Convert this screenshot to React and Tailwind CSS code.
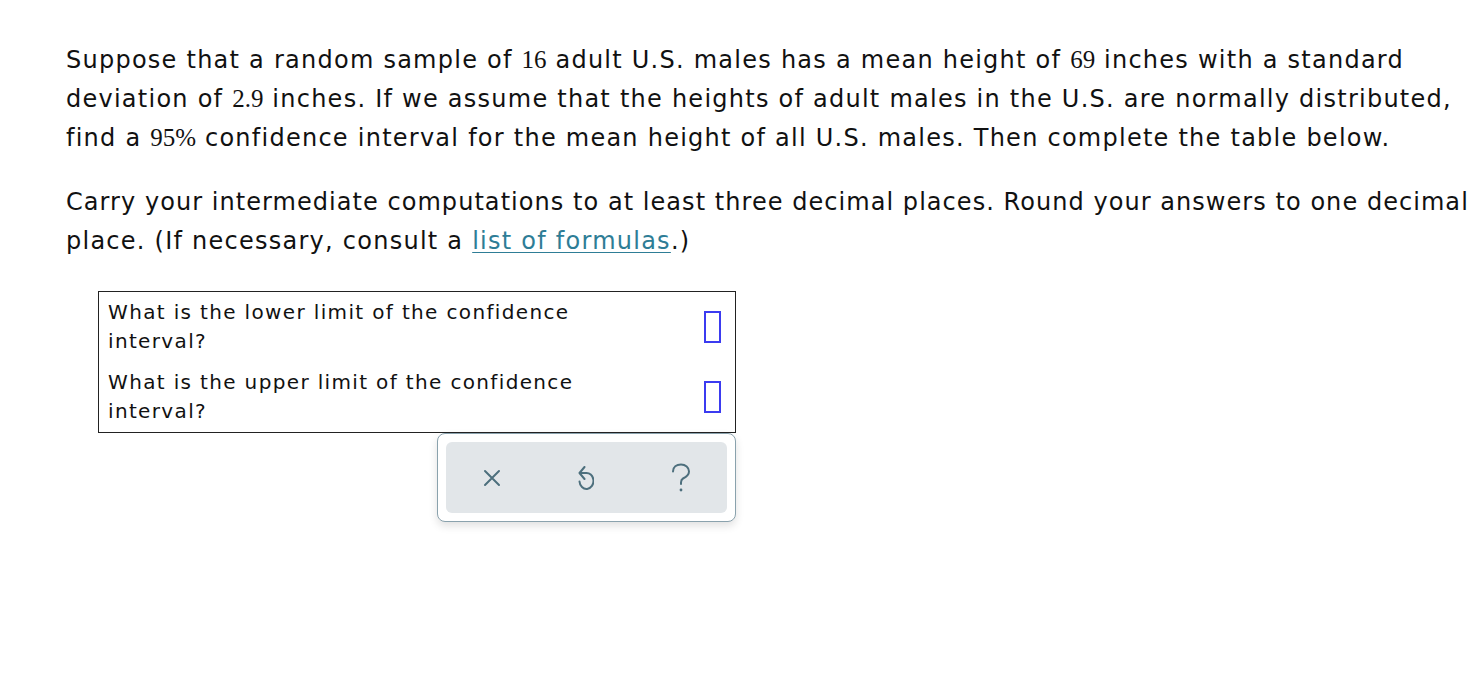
import React from "react";

const num = "font-['Liberation_Serif',serif] text-[25px] leading-none tracking-normal";

export default function App() {
  return (
    <div className="min-h-[678px] w-[1481px] overflow-hidden bg-white font-['DejaVu_Sans',Verdana,sans-serif] text-[#111]">
      <div className="pl-[66px] pt-[41px]">
        <p className="whitespace-nowrap text-[24px] leading-[39px] tracking-[1.25px]">
          Suppose that a random sample of <span className={num}>16</span> adult U.S. males has a mean height of{" "}
          <span className={num}>69</span> inches with a standard
          <br />
          deviation of <span className={num}>2.9</span> inches. If we assume that the heights of adult males in the U.S.
          are normally distributed,
          <br />
          find a <span className={num}>95%</span> confidence interval for the mean height of all U.S. males. Then complete
          the table below.
        </p>
        <p className="mt-[25px] whitespace-nowrap text-[24px] leading-[39px] tracking-[1.25px]">
          <span className="tracking-[1.05px]">
            Carry your intermediate computations to at least three decimal places. Round your answers to one decimal
          </span>
          <br />
          place. (If necessary, consult a{" "}
          <a href="#" className="text-[#2e7d96] underline decoration-1 underline-offset-[3px]">
            list of formulas
          </a>
          .)
        </p>
      </div>
      <div className="ml-[98px] mt-[30px] w-[638px]">
        <div className="border border-[#222] text-[20px] leading-[29px] tracking-[1.35px]">
          <div className="flex items-center justify-between py-[6px] pl-[9px] pr-[14px]">
            <div className="w-[500px]">
              What is the lower limit of the confidence
              <br />
              interval?
            </div>
            <div className="h-[32px] w-[17px] border-2 border-[#3b3bf0]" />
          </div>
          <div className="flex items-center justify-between py-[6px] pl-[9px] pr-[14px]">
            <div className="w-[500px]">
              What is the upper limit of the confidence
              <br />
              interval?
            </div>
            <div className="h-[32px] w-[17px] border-2 border-[#3b3bf0]" />
          </div>
        </div>
        <div className="ml-[339px] w-[299px] rounded-[8px] border border-[#8aa2ad] bg-white p-[8px] shadow-[0_4px_8px_rgba(0,0,0,0.12)]">
          <div className="flex h-[71px] items-center rounded-[6px] bg-[#e2e6e9] pl-[31px] text-[#4d6f7d]">
            <div className="flex w-[30px] justify-center">
              <svg width="18" height="18" viewBox="0 0 18 18" fill="none" stroke="currentColor" strokeWidth="2" strokeLinecap="round">
                <path d="M2 2 L16 16 M16 2 L2 16" />
              </svg>
            </div>
            <div className="ml-[64px] flex w-[30px] justify-center">
              <svg width="16" height="24" viewBox="0 0 16 24" fill="none" stroke="currentColor" strokeWidth="2" strokeLinecap="round" strokeLinejoin="round">
                <path d="M2 7 H7.5 A7 8 0 1 1 1.5 15.5" />
                <path d="M6.5 1 L1.5 7 L6.5 13" />
              </svg>
            </div>
            <div className="ml-[65px] flex w-[30px] justify-center">
              <svg width="20" height="30" viewBox="0 0 20 30" fill="none" stroke="currentColor" strokeWidth="2" strokeLinecap="round" strokeLinejoin="round">
                <path d="M2 8.5 C2 4 5.5 1.5 10 1.5 C14.5 1.5 18 4.5 18 8.5 C18 12.5 15 14 12 15.5 C10.5 16.3 10 17.5 10 19.5 V21" />
                <circle cx="10" cy="27" r="1.4" fill="currentColor" stroke="none" />
              </svg>
            </div>
          </div>
        </div>
      </div>
    </div>
  );
}
